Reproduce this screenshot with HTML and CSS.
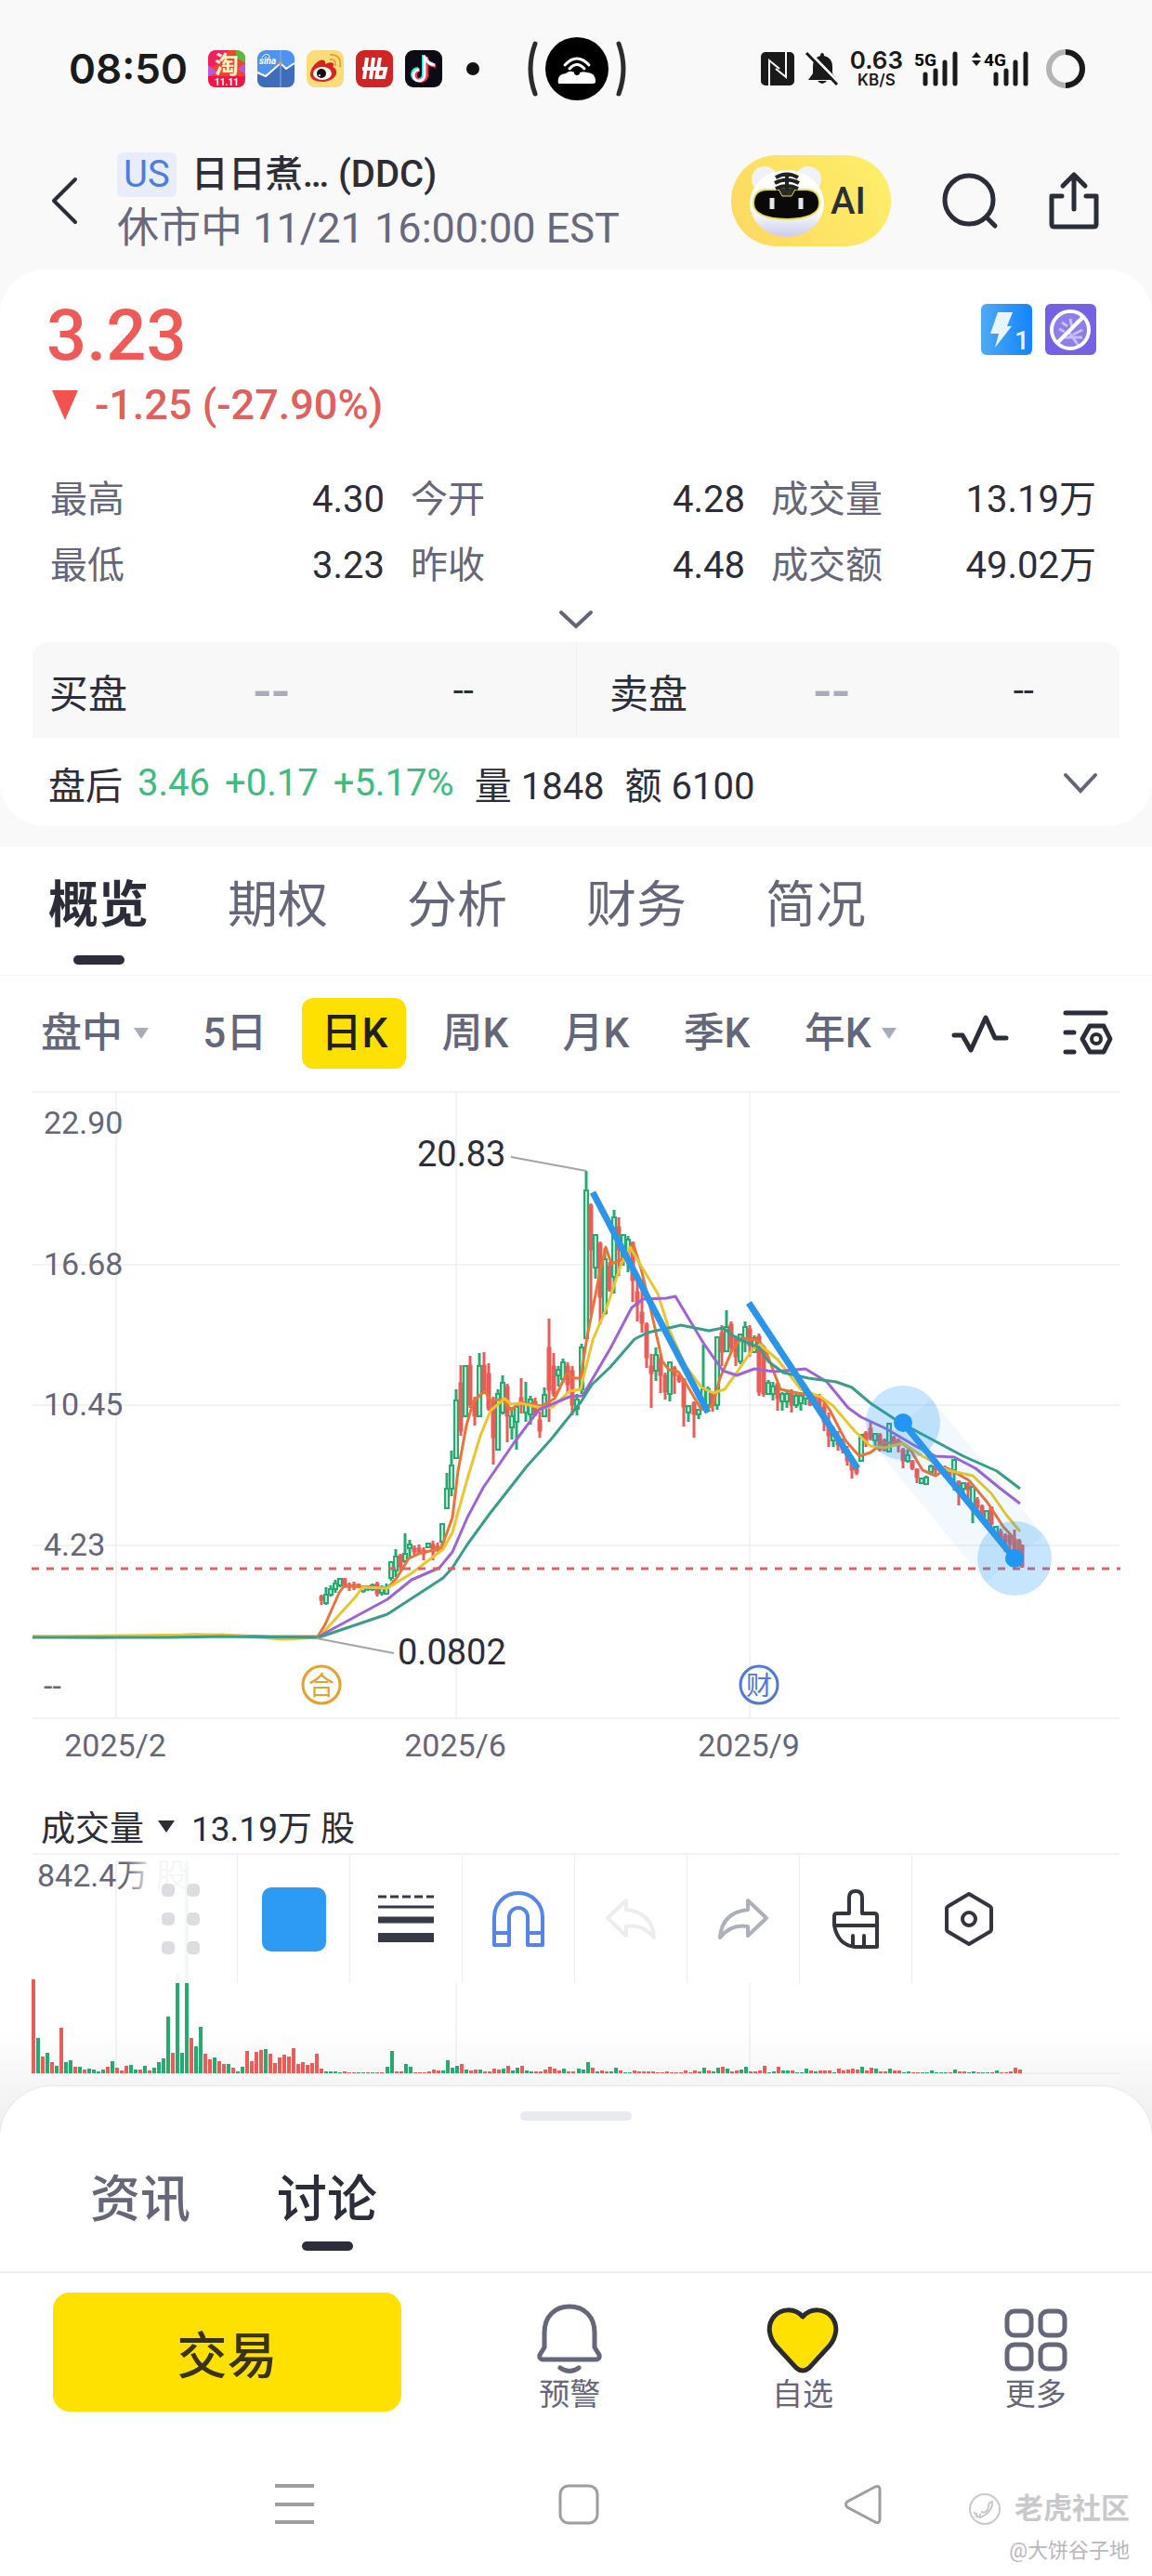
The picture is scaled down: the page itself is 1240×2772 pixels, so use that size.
FILE: index.html
```html
<!DOCTYPE html>
<html lang="zh-CN">
<head>
<meta charset="UTF-8">
<meta name="viewport" content="width=device-width, initial-scale=1.0">
<title>日日煮 (DDC)</title>
<link rel="stylesheet" href="styles.css">
</head>
<body>

<div class="status-bar">
  <div class="status-left">
    <span class="clock">08:50</span>
    <svg class="app-icon" viewBox="0 0 40 40">
      <rect width="40" height="40" rx="9" fill="#f0442d"/>
      <path d="M0 9Q0 0 9 0H22L12 14L0 20z" fill="#f0205c"/>
      <path d="M30 0Q40 0 40 10V14L30 8z" fill="#57b83b"/>
      <path d="M0 16L10 24L0 28zM40 14V26L32 20z" fill="#b55be0"/>
      <path d="M0 28H40V31Q40 40 31 40H9Q0 40 0 31z" fill="#f01548"/>
      <text x="20" y="25" font-size="26" font-weight="700" fill="#fff3c8" text-anchor="middle">淘</text>
      <text x="20" y="38" font-size="10" font-weight="700" fill="#fff" text-anchor="middle">11.11</text>
    </svg>
    <svg class="app-icon" viewBox="0 0 40 40">
      <rect width="40" height="40" rx="9" fill="#4f92f0"/>
      <path d="M0 24L9 28L25 14L31 20L40 14V31Q40 40 31 40H9Q0 40 0 31z" fill="#3f6dbb"/>
      <path d="M0 24L9 28L25 14L31 20L40 14" fill="none" stroke="#fff" stroke-width="2"/>
      <path d="M25 0V40" stroke="#8bb1e6" stroke-width="1"/>
      <circle cx="25" cy="14" r="2" fill="#d9a14e"/>
      <path d="M5 8Q8 3 12 5Q15 7 11 9" fill="none" stroke="#fff" stroke-width="1"/>
      <text x="2" y="15" font-size="10" font-weight="700" font-style="italic" fill="#fff">sina</text>
    </svg>
    <svg class="app-icon" viewBox="0 0 40 40">
      <rect width="40" height="40" rx="9" fill="#fbdc7a"/>
      <path d="M4 26C4 17 15 8 19 11C21 13 20 15 20 15C28 11 31 15 28 18C35 20 34 33 18 34C9 34 4 31 4 26z" fill="#d8221f"/>
      <ellipse cx="17" cy="25" rx="10" ry="7" fill="#fff"/>
      <circle cx="16" cy="25" r="5" fill="#111"/>
      <circle cx="14" cy="27" r="1" fill="#fff"/>
      <path d="M25 10Q32 9 31 17M25 5Q38 4 36 18" fill="none" stroke="#e8a33a" stroke-width="2"/>
    </svg>
    <svg class="app-icon" viewBox="0 0 40 40">
      <rect width="40" height="40" rx="9" fill="#d02525"/>
      <path d="M12 8L9 31M19 8L16 31M7 20H23M26 8L22 31M22 20H32L30 29H22" fill="none" stroke="#fff" stroke-width="4"/>
    </svg>
    <svg class="app-icon" viewBox="0 0 40 40">
      <rect width="40" height="40" rx="9" fill="#0c0a14"/>
      <path d="M20 5V26A6 6 0 1 1 14 20M20 7Q22 14 30 15" fill="none" stroke="#28e3e0" stroke-width="4"/>
      <path d="M23 7V28A6 6 0 1 1 16 21M23 9Q25 16 33 17" fill="none" stroke="#f4315b" stroke-width="4"/>
      <path d="M21 6V27A6 6 0 1 1 15 21M22 8Q24 15 32 16" fill="none" stroke="#fff" stroke-width="3"/>
    </svg>
    <svg class="dot" viewBox="0 0 14 14"><circle cx="7" cy="7" r="7" fill="#111"/></svg>
  </div>
  <svg class="camera" viewBox="0 0 108 68">
    <path d="M9 7Q-1 34 9 61M99 7Q109 34 99 61" fill="none" stroke="#2b2b2b" stroke-width="5" stroke-linecap="round"/>
    <circle cx="54" cy="34" r="34" fill="#000"/>
    <path d="M34 50Q32 40 42 39Q48 34 54 40Q58 36 65 38Q74 38 74 48Q74 50 70 50z" fill="#fff"/>
    <path d="M41 30Q54 16 67 30M46 34Q54 25 62 34" fill="none" stroke="#fff" stroke-width="3" stroke-linecap="round"/>
    <circle cx="54" cy="38" r="3" fill="#000"/>
  </svg>
  <div class="status-right">
    <svg class="nfc" viewBox="0 0 36 36">
      <rect width="36" height="36" rx="5" fill="#1a1a1a"/>
      <path d="M9 36V9L20 18M27 0V27L16 18" fill="none" stroke="#fafafa" stroke-width="2"/>
    </svg>
    <svg class="mute" viewBox="0 0 36 36">
      <path d="M18 1Q20 1 20 4Q29 6 29 16V23L34 30H3L8 23V16Q8 6 16 4Q16 1 18 1zM13 31H23Q18 37 13 31z" fill="#1a1a1a"/>
      <path d="M3 -1L36 33" stroke="#fafafa" stroke-width="3"/>
      <path d="M1 1L34 35" stroke="#1a1a1a" stroke-width="3"/>
    </svg>
    <span class="speed"><b>0.63</b><small>KB/S</small></span>
    <svg class="signal" viewBox="0 0 50 36">
      <text x="0" y="15" class="net">5G</text>
      <path d="M12 24V34M23 20V34M33 11V34M44 2V34" stroke="#1a1a1a" stroke-width="5" stroke-linecap="round"/>
    </svg>
    <svg class="signal signal-4g" viewBox="0 0 64 36">
      <path d="M0 6L5 0L10 6zM0 9L5 15L10 9z" fill="#1a1a1a"/>
      <text x="13" y="15" class="net">4G</text>
      <path d="M26 24V34M37 20V34M47 11V34M58 2V34" stroke="#1a1a1a" stroke-width="5" stroke-linecap="round"/>
    </svg>
    <svg class="battery" viewBox="0 0 42 42">
      <circle cx="21" cy="21" r="18" fill="none" stroke="#b4b4b4" stroke-width="6"/>
      <path d="M21 3A18 18 0 0 1 21 39" fill="none" stroke="#1a1a1a" stroke-width="6"/>
    </svg>
  </div>
</div>

<header class="header">
  <button class="icon-btn back" aria-label="返回">
    <svg width="30" height="52" viewBox="0 0 30 52"><path d="M27 3L4 26L27 49" fill="none" stroke="#2c2d3a" stroke-width="4" stroke-linecap="round" stroke-linejoin="round"/></svg>
  </button>
  <div class="title">
    <h1><span class="market">US</span>日日煮… (DDC)</h1>
    <p>休市中 11/21 16:00:00 EST</p>
  </div>
  <button class="ai-btn">
    <svg width="82" height="86" viewBox="0 0 82 86">
      <defs><linearGradient id="head" x1="0" y1="0" x2="0" y2="1"><stop offset="0.6" stop-color="#fff"/><stop offset="1" stop-color="#c9cdea"/></linearGradient></defs>
      <circle cx="17" cy="20" r="14" fill="#f1f1fa"/>
      <circle cx="64" cy="20" r="14" fill="#f1f1fa"/>
      <ellipse cx="41" cy="46" rx="40" ry="36" fill="url(#head)"/>
      <path d="M5 46Q5 31 20 31H61Q76 31 76 46Q76 62 41 63Q5 62 5 46z" fill="#0a0908" stroke="#e9dd50" stroke-width="2"/>
      <path d="M31 29H51L46 38H36z" fill="#2b2b2b" stroke="#e9dd50" stroke-width="1"/>
      <path d="M29 18Q41 11 53 18M28 24Q41 17 54 24M29 30Q41 24 53 30M41 15V32" fill="none" stroke="#222" stroke-width="4"/>
      <path d="M25 40V52M56 40V52" stroke="#e6e6ea" stroke-width="5"/>
    </svg>
    AI
  </button>
  <button class="icon-btn search" aria-label="搜索">
    <svg width="62" height="62" viewBox="0 0 62 62"><circle cx="30" cy="30" r="26" fill="none" stroke="#2c2d3a" stroke-width="5"/><path d="M49 49L58 58" stroke="#2c2d3a" stroke-width="5" stroke-linecap="round"/></svg>
  </button>
  <button class="icon-btn share" aria-label="分享">
    <svg width="54" height="62" viewBox="0 0 54 62"><path d="M14 26H3V56Q3 59 6 59H48Q51 59 51 56V26H40M27 40V4M15 15L27 3L39 15" fill="none" stroke="#2c2d3a" stroke-width="5" stroke-linecap="round" stroke-linejoin="round"/></svg>
  </button>
</header>

<section class="card quote">
  <div class="price-row">
    <strong class="price">3.23</strong>
    <span class="badges">
      <svg width="55" height="55" viewBox="0 0 55 55">
        <defs><linearGradient id="lv1"><stop offset="0" stop-color="#4eaaf3"/><stop offset="1" stop-color="#1384fb"/></linearGradient></defs>
        <rect width="55" height="55" rx="6" fill="url(#lv1)"/>
        <path d="M18 9H34L28 24H33L15 47L19 32H10z" fill="#e8f5ff"/>
        <text x="36" y="49" font-size="28" font-weight="500" fill="#e8f5ff">1</text>
      </svg>
      <svg width="55" height="55" viewBox="0 0 55 55">
        <rect width="55" height="55" rx="6" fill="#7660e4"/>
        <circle cx="27" cy="28" r="18" fill="#8f7ee8"/>
        <path d="M18 20L24 24M15 27L21 30M27 16L29 26M35 18L31 24M17 36H40M26 31L36 45M40 28L30 33" stroke="#c7bff5" stroke-width="3"/>
        <circle cx="27" cy="28" r="20" fill="none" stroke="#fff" stroke-width="4"/>
        <path d="M13 42L41 14" stroke="#fff" stroke-width="4"/>
      </svg>
    </span>
  </div>
  <div class="change"><svg width="28" height="32" viewBox="0 0 28 32"><path d="M0 0H28L14 32z" fill="#f4524f"/></svg>-1.25 (-27.90%)</div>

  <dl class="stats">
    <div><dt>最高</dt><dd>4.30</dd></div>
    <div><dt>今开</dt><dd>4.28</dd></div>
    <div><dt>成交量</dt><dd>13.19万</dd></div>
    <div><dt>最低</dt><dd>3.23</dd></div>
    <div><dt>昨收</dt><dd>4.48</dd></div>
    <div><dt>成交额</dt><dd>49.02万</dd></div>
  </dl>
  <button class="expand" aria-label="展开">
    <svg width="38" height="22" viewBox="0 0 38 22"><path d="M3 3L19 18L35 3" fill="none" stroke="#63647a" stroke-width="4" stroke-linecap="round"/></svg>
  </button>

  <div class="book">
    <div class="side"><span>买盘</span><b>--</b><i>--</i></div>
    <div class="side"><span>卖盘</span><b>--</b><i>--</i></div>
  </div>

  <div class="after">
    <span>盘后</span>
    <span class="up">3.46</span>
    <span class="up">+0.17</span>
    <span class="up">+5.17%</span>
    <span class="pair">量<span>1848</span></span>
    <span class="pair">额<span>6100</span></span>
    <button class="icon-btn" aria-label="更多盘后">
      <svg width="38" height="24" viewBox="0 0 38 24"><path d="M3 3L19 20L35 3" fill="none" stroke="#63647a" stroke-width="4" stroke-linecap="round"/></svg>
    </button>
  </div>
</section>

<main class="content">
  <nav class="tabs">
    <button class="tab active">概览</button>
    <button class="tab">期权</button>
    <button class="tab">分析</button>
    <button class="tab">财务</button>
    <button class="tab">简况</button>
  </nav>

  <div class="periods">
    <button class="period">盘中<span class="caret"></span></button>
    <button class="period">5日</button>
    <button class="period selected">日K</button>
    <button class="period">周K</button>
    <button class="period">月K</button>
    <button class="period">季K</button>
    <button class="period">年K<span class="caret"></span></button>
    <button class="period" aria-label="画线">
      <svg width="62" height="42" viewBox="0 0 62 42"><path d="M3 23H12L21 39L37 4L47 26H59" fill="none" stroke="#2c2d3a" stroke-width="5" stroke-linecap="round" stroke-linejoin="round"/></svg>
    </button>
    <button class="period" aria-label="指标设置">
      <svg width="54" height="52" viewBox="0 0 54 52"><path d="M3 4H46M3 25H12M3 46H12M29 18H44L51 32L44 46H29L21 32z" fill="none" stroke="#2c2d3a" stroke-width="5" stroke-linecap="round" stroke-linejoin="round"/><circle cx="36" cy="32" r="5" fill="none" stroke="#2c2d3a" stroke-width="4"/></svg>
    </button>
  </div>

  <svg class="chart" viewBox="0 1174 1240 763">
    <path class="grid" d="M35 1175H1205M35 1361H1205M35 1512H1205M35 1663H1205M35 1849H1205M125 1175V1849M491 1175V1849M807 1175V1849"/>
    <g id="candles"></g>
    <g class="ma">
      <path stroke="#e8743a" d="M35 1761L110 1762L210 1759L290 1761L342 1761L350 1748L365 1714L370 1707L400 1708L417 1709L427 1698L440 1677L453 1671L467 1668L475 1666L487 1633L493 1583L502 1534L510 1507L522 1497L528 1507L541 1506L550 1517L560 1509L583 1513L597 1505L610 1478L618 1483L625 1483L632 1438L645 1373L652 1342L658 1360L668 1356L682 1340L690 1365L700 1407L713 1465L720 1474L730 1476L738 1488L755 1517L767 1513L775 1483L788 1453L798 1440L815 1442L823 1450L840 1495L863 1500L883 1503L893 1517L910 1550L925 1567L937 1563L950 1553L970 1552L980 1560L993 1582L1007 1588L1020 1580L1043 1593L1063 1617L1080 1643L1093 1657L1100 1668"/>
      <path stroke="#e9c62d" d="M35 1761L240 1759L305 1764L343 1762L383 1718L390 1708L417 1709L443 1693L477 1667L487 1649L502 1595L517 1545L528 1518L543 1505L550 1511L560 1510L583 1515L595 1514L613 1497L625 1495L638 1442L653 1407L668 1362L678 1342L690 1362L708 1392L720 1430L738 1470L755 1493L768 1499L780 1495L793 1477L810 1452L818 1447L837 1463L862 1495L883 1503L897 1513L920 1540L937 1556L952 1558L972 1553L993 1567L1020 1582L1047 1588L1067 1607L1083 1630L1098 1648"/>
      <path stroke="#a063d2" d="M343 1761L417 1721L443 1700L473 1687L487 1670L503 1633L520 1601L553 1553L580 1517L613 1503L627 1502L657 1451L680 1407L692 1398L717 1397L727 1395L757 1445L778 1475L793 1480L812 1473L833 1476L867 1473L890 1487L913 1515L927 1525L953 1537L987 1557L1007 1567L1027 1568L1050 1580L1077 1602L1098 1618"/>
      <path stroke="#3a9c8b" d="M35 1762H180L240 1761L343 1762L417 1737L477 1698L487 1687L503 1662L527 1629L567 1578L593 1549L625 1509L637 1490L657 1471L683 1441L697 1434L720 1429L733 1426L763 1432L778 1429L793 1440L817 1450L827 1465L843 1477L870 1483L900 1487L917 1493L937 1510L963 1527L990 1542L1037 1567L1073 1583L1098 1602"/>
    </g>
    <path d="M34 1688H1206" stroke="#dd6462" stroke-width="3" stroke-dasharray="8 8"/>
    <g class="trend">
      <path class="band" d="M972 1531L1092 1677"/>
      <circle class="halo" cx="972" cy="1531" r="40"/>
      <circle class="halo" cx="1092" cy="1677" r="40"/>
      <path d="M638 1283L762 1520M806 1402L923 1580M972 1531L1092 1677"/>
      <circle cx="972" cy="1531" r="10"/>
      <circle cx="1092" cy="1677" r="10"/>
    </g>
    <path class="leader" d="M550 1245L631 1260M341 1763L424 1779"/>
    <g class="peak">
      <text x="449" y="1255">20.83</text>
      <text x="428" y="1791">0.0802</text>
    </g>
    <g class="axis">
      <text x="47" y="1220">22.90</text>
      <text x="47" y="1372">16.68</text>
      <text x="47" y="1523">10.45</text>
      <text x="47" y="1674">4.23</text>
      <text x="47" y="1826">--</text>
      <text x="124" y="1890" text-anchor="middle">2025/2</text>
      <text x="490" y="1890" text-anchor="middle">2025/6</text>
      <text x="806" y="1890" text-anchor="middle">2025/9</text>
    </g>
    <g class="event">
      <circle cx="346" cy="1813" r="20" stroke="#e5a12e"/>
      <text x="346" y="1824" fill="#e5a12e">合</text>
      <circle cx="817" cy="1813" r="20" stroke="#5079d3"/>
      <text x="817" y="1824" fill="#5079d3">财</text>
    </g>
  </svg>

  <div class="volume-head">成交量<span class="caret dark"></span><span>13.19万 股</span></div>
  <div class="volume">
    <svg class="chart" viewBox="0 1995 1240 300">
      <path class="grid" d="M35 1995H1205M35 2231H1205M125 2003V2231M491 1995V2231M807 1995V2231"/>
      <g id="bars"></g>
      <text x="40" y="2030" class="vol-max">842.4万 股</text>
    </svg>
    <div class="toolbar">
      <button class="drag" aria-label="移动">
        <svg width="42" height="76" viewBox="0 0 42 76" fill="#dcdce1"><rect width="14" height="14" rx="5"/><rect x="27" width="14" height="14" rx="5"/><rect y="31" width="14" height="14" rx="5"/><rect x="27" y="31" width="14" height="14" rx="5"/><rect y="62" width="14" height="14" rx="5"/><rect x="27" y="62" width="14" height="14" rx="5"/></svg>
      </button>
      <button aria-label="颜色"><span class="swatch"></span></button>
      <button aria-label="线型">
        <svg width="62" height="52" viewBox="0 0 62 52" stroke="#383946"><path d="M1 2H61" stroke-width="3" stroke-dasharray="9 4"/><path d="M1 13H61" stroke-width="3"/><path d="M1 27H61" stroke-width="7"/><path d="M1 46H61" stroke-width="10"/></svg>
      </button>
      <button aria-label="磁吸">
        <svg width="56" height="60" viewBox="0 0 56 60" fill="none" stroke="#5585e8" stroke-width="4" stroke-linejoin="round"><path d="M2 58V28A26 26 0 0 1 54 28V58H38V28A10 10 0 0 0 18 28V58zM2 45H18M38 45H54"/></svg>
      </button>
      <button aria-label="撤销">
        <svg width="56" height="46" viewBox="0 0 56 46" fill="none" stroke="#ededf0" stroke-width="4" stroke-linejoin="round"><path d="M23 3L3 22L23 41V31Q41 28 53 43Q51 16 23 13z"/></svg>
      </button>
      <button aria-label="重做">
        <svg width="56" height="46" viewBox="0 0 56 46" fill="none" stroke="#adafba" stroke-width="4" stroke-linejoin="round"><path d="M33 3L53 22L33 41V31Q15 28 3 43Q5 16 33 13z"/></svg>
      </button>
      <button aria-label="清除">
        <svg width="50" height="64" viewBox="0 0 50 64" fill="none" stroke="#343541" stroke-width="4" stroke-linecap="round" stroke-linejoin="round"><path d="M18 26V9Q18 2 25 2T32 9V26H45Q48 26 48 29V62H24Q6 60 2 39V29Q2 26 5 26zM2 39H48M22 50V61M34 50V61"/></svg>
      </button>
      <button aria-label="设置">
        <svg width="52" height="58" viewBox="0 0 52 58" fill="none" stroke="#343541" stroke-width="4" stroke-linejoin="round"><path d="M26 2L48 15Q50 16 50 18V40Q50 42 48 43L26 56L4 43Q2 42 2 40V18Q2 16 4 15z"/><circle cx="26" cy="29" r="7"/></svg>
      </button>
    </div>
  </div>
</main>

<section class="sheet">
  <div class="handle"></div>
  <nav class="sheet-tabs">
    <button class="tab">资讯</button>
    <button class="tab active">讨论</button>
  </nav>
</section>

<div class="actions">
  <button class="trade">交易</button>
  <button class="action">
    <svg width="72" height="78" viewBox="0 0 72 78" fill="none" stroke="#65667a" stroke-width="5" stroke-linecap="round" stroke-linejoin="round"><path d="M36 3C20 3 9 14 9 31V47L4 55Q3 60 8 60H64Q69 60 68 55L63 47V31C63 14 52 3 36 3zM26 69Q36 76 46 69"/></svg>
    预警
  </button>
  <button class="action">
    <svg width="76" height="74" viewBox="0 0 76 74"><path d="M38 10C29 0 15 1 7 10C-1 20 2 32 9 41L31 65Q38 71 45 65L67 41C74 32 77 20 69 10C61 1 47 0 38 10z" fill="#fee101" stroke="#2b2b2b" stroke-width="5" stroke-linejoin="round"/></svg>
    自选
  </button>
  <button class="action">
    <svg width="68" height="73" viewBox="0 0 68 73" fill="none" stroke="#65667a" stroke-width="5"><rect x="3" y="3" width="26" height="26" rx="8"/><rect x="39" y="3" width="26" height="26" rx="8"/><rect x="3" y="39" width="26" height="26" rx="8"/><rect x="39" y="39" width="26" height="26" rx="8"/></svg>
    更多
  </button>
</div>

<footer class="system-nav">
  <button class="icon-btn" aria-label="任务"><svg width="42" height="44" viewBox="0 0 42 44"><path d="M0 2H42M0 22H42M0 41H42" stroke="#9e9e9e" stroke-width="4"/></svg></button>
  <button class="icon-btn" aria-label="主页"><svg width="44" height="44" viewBox="0 0 44 44"><rect x="2" y="2" width="40" height="40" rx="9" fill="none" stroke="#9e9e9e" stroke-width="3"/></svg></button>
  <button class="icon-btn" aria-label="返回上级"><svg width="42" height="44" viewBox="0 0 42 44"><path d="M34 3Q39 1 39 6V38Q39 43 34 41L4 25Q1 22 4 19z" fill="none" stroke="#9e9e9e" stroke-width="3"/></svg></button>
  <div class="watermark">
    <p class="brand"><svg width="36" height="36" viewBox="0 0 36 36" fill="none" stroke="#c9c9cd" stroke-width="2"><circle cx="18" cy="18" r="16"/><path d="M6 21Q12 30 17 25Q27 19 26 10Q22 10 22 16Q20 23 14 21M9 22V27M13 23V28"/></svg>老虎社区</p>
    <p>@大饼谷子地</p>
  </div>
</footer>

<script>
  // one row per day: x, high, low, body top, body bottom, colour
  const candles = `
346 1716 1727 1718 1722 r,351 1708 1727 1716 1725 g,356 1706 1718 1710 1716 g,361 1700 1714 1704 1710 g
366 1698 1708 1699 1706 g,371 1698 1708 1699 1706 r,376 1703 1712 1705 1707 r,381 1702 1711 1705 1707 r
386 1704 1708 1705 1707 r,391 1706 1714 1708 1712 g,396 1706 1712 1707 1710 g,401 1704 1712 1706 1710 g
406 1702 1718 1704 1715 r,411 1706 1717 1708 1714 g,416 1704 1716 1708 1715 g,421 1680 1701 1681 1698 g
426 1667 1697 1675 1690 g,431 1672 1690 1674 1686 r,436 1650 1682 1672 1680 g,441 1657 1676 1662 1666 g
446 1663 1673 1666 1670 r,451 1662 1673 1666 1670 r,456 1665 1679 1668 1672 r,461 1660 1666 1661 1665 g
466 1658 1679 1662 1670 r,471 1660 1670 1664 1668 r,476 1639 1664 1640 1659 g,481 1585 1624 1602 1623 g
486 1561 1610 1577 1602 g,491 1495 1570 1507 1569 g,496 1469 1545 1488 1540 r,501 1469 1525 1470 1524 g
506 1459 1515 1469 1512 r,511 1503 1534 1508 1524 r,516 1456 1525 1470 1524 g,521 1455 1500 1469 1498 r
526 1467 1518 1478 1516 r,531 1503 1576 1508 1547 r,536 1495 1561 1500 1560 g,541 1480 1522 1488 1520 g
546 1489 1552 1492 1524 r,551 1514 1549 1524 1536 g,556 1511 1560 1514 1530 g,561 1483 1521 1504 1512 r
566 1487 1530 1510 1520 g,571 1502 1533 1506 1522 g,576 1504 1524 1508 1522 r,581 1519 1547 1528 1540 r
586 1493 1525 1501 1524 g,591 1419 1530 1450 1496 r,596 1456 1503 1470 1500 r,601 1470 1492 1474 1480 g
606 1462 1488 1466 1484 g,611 1466 1500 1470 1490 r,616 1470 1523 1475 1512 r,621 1500 1523 1506 1516 g
626 1446 1500 1450 1495 g,631 1260 1440 1281 1440 g,636 1295 1416 1297 1345 r,641 1328 1376 1329 1364 g
646 1336 1425 1338 1396 r,651 1343 1415 1355 1413 g,656 1358 1390 1362 1388 r,661 1302 1392 1310 1374 g
666 1310 1373 1320 1345 r,671 1328 1362 1329 1352 g,676 1330 1369 1334 1345 g,681 1336 1401 1337 1378 r
686 1373 1422 1390 1404 r,691 1377 1434 1412 1424 r,696 1423 1472 1425 1461 r,701 1457 1515 1470 1478 r
706 1450 1486 1458 1475 g,711 1458 1499 1462 1480 r,716 1477 1506 1480 1498 r,721 1466 1508 1466 1500 g
726 1470 1500 1472 1480 r,731 1478 1488 1480 1486 r,736 1483 1535 1484 1514 r,741 1512 1530 1513 1520 g
747 1508 1547 1510 1522 r,752 1516 1527 1517 1522 g,757 1447 1515 1495 1514 g,762 1492 1513 1495 1512 g
767 1497 1519 1498 1513 r,772 1438 1517 1439 1512 g,777 1426 1470 1434 1455 r,782 1410 1455 1428 1454 g
787 1422 1455 1425 1450 r,792 1437 1470 1440 1460 r,797 1435 1468 1436 1465 g,802 1422 1455 1428 1440 g
807 1426 1460 1430 1448 r,812 1437 1456 1440 1455 g,817 1435 1502 1438 1498 r,822 1448 1503 1450 1500 r
827 1485 1501 1488 1500 g,832 1487 1507 1492 1500 g,837 1488 1518 1489 1505 r,842 1498 1518 1500 1508 g
847 1497 1515 1500 1508 g,852 1495 1520 1498 1512 r,857 1500 1515 1502 1512 g,862 1498 1518 1502 1510 g
867 1490 1512 1498 1505 g,872 1500 1513 1502 1512 r,877 1500 1513 1503 1510 r,882 1500 1522 1504 1516 r
887 1510 1540 1514 1530 r,892 1520 1557 1530 1545 r,897 1535 1557 1540 1550 g,902 1540 1561 1545 1555 r
907 1548 1564 1552 1560 r,912 1556 1577 1560 1572 r,917 1568 1591 1572 1582 r,922 1575 1587 1578 1585 r
927 1543 1573 1544 1572 g,932 1540 1557 1542 1552 r,937 1530 1550 1537 1548 r,942 1542 1558 1543 1550 g
947 1542 1562 1544 1560 r,952 1548 1562 1550 1560 r,957 1531 1563 1532 1562 g,962 1545 1556 1547 1553 r
967 1548 1563 1550 1556 r,972 1558 1580 1560 1572 r,977 1560 1574 1566 1572 g,982 1571 1582 1572 1580 r
987 1580 1596 1581 1590 r,992 1590 1596 1591 1596 g,997 1588 1598 1590 1597 g,1002 1576 1585 1578 1584 g
1007 1576 1586 1578 1582 r,1012 1578 1584 1579 1583 r,1017 1577 1590 1579 1585 r,1022 1580 1595 1582 1588 r
1027 1570 1604 1571 1582 g,1032 1593 1620 1594 1600 r,1037 1595 1612 1596 1602 g,1042 1595 1612 1597 1603 r
1047 1598 1639 1600 1620 g,1052 1611 1625 1614 1622 r,1057 1619 1634 1621 1630 r,1062 1625 1642 1626 1636 g
1067 1621 1642 1622 1640 r,1072 1642 1652 1643 1650 g,1077 1645 1660 1648 1656 r,1082 1650 1670 1652 1660 r
1087 1650 1672 1652 1662 r,1092 1646 1672 1656 1670 r,1097 1656 1672 1658 1670 r,1100 1662 1687 1663 1686 r`;

  // runs of volume bars: start x, then colour + height every 5px
  const volumes = {
    35: 'r101 g38 r18 g22 r12 g8 r49 g12 g14 r7 g7 r4 g5 g4 g2 g4 r7 g13 r6 r3 r8 g9 g4 r4 g8 r3 g6 g12 g16 g61 r22 g108 g22 g228 r38 g29 g50 r21 r15 g17 r13 r10 g10 r6 g2 g7 r24 r13 r23 r25 g26 r21 r11 r17 r20 r18 r27 r10 r12 r9 r11 r21 r5 g2 g2 g2 g1 r2 r1 r1 g1 g1 r1 g1 r1 r1',
    416: 'g7 g24 r2 r2 g10 g7 r1 r1 r1 r2 r4 r3 g3 g14 g6 g8 r10 g4 r3 r4 g4 r2 r2 r5 r4 g5 r8 g3 g6 r8 g3 g2 r2 r2 r4 r7 r5 r3 g5 r2 r2',
    622: 'g5 g4 g12 r6 g2 r3 r2 g2 g6 r3 g1 g1 r3 r2 r2 r2 r2 r1 r1 r2 r1 r1 r1 r3 r1 r3 r2 g6 r3 g2 g6 r7 g5 r2 r3 g4 g7 r2 r2 r3 r8 g1 g2 r7 g3 g3 r3 g1 g1 g5 r3 g2 r3 r3 r3 g1 r5 r3 r4 r5 r4 g7 r3 r6 g5 r2 r2 g5 r3 r3 g1 g2 r1 r1 g1 g1 g3 g1 g1 g1 r1 g4 r2 r2 g1 g2 r1 g1 g1 r1 g3 r1 r1 r2 r6 r4'
  };

  const colors = { r: '#ea5c57', g: '#26aa70' };

  let html = '';
  candles.trim().split(/[\n,]/).forEach(row => {
    const [x, high, low, top, bottom, c] = row.split(' ');
    html += `<path d="M${x} ${high}V${low}" stroke="${colors[c]}" stroke-width="3"/>`;
    html += `<rect x="${x - 2}" y="${top}" width="4" height="${bottom - top}" fill="${c == 'g' ? '#bfe8d3' : colors.r}" stroke="${colors[c]}" stroke-width="${c == 'g' ? 2 : 1}"/>`;
  });
  document.getElementById('candles').innerHTML = html;

  html = '';
  for (const start in volumes) {
    volumes[start].split(' ').forEach((bar, i) => {
      const h = bar.slice(1);
      html += `<rect x="${Number(start) - 1 + i * 5}" y="${2231 - h}" width="4" height="${h}" fill="${colors[bar[0]]}"/>`;
    });
  }
  document.getElementById('bars').innerHTML = html;
</script>

</body>
</html>
```

FILE: styles.css
```css
* {
  box-sizing: border-box;
}
body {
  margin: 0;
  font-family: Roboto, "Noto Sans CJK SC", sans-serif;
  font-size: 40px;
  color: #2c2d38;
  background-color: #f9f9f9;
}
h1, p, dl, dd {
  margin: 0;
}
svg {
  display: block;
  overflow: visible;
}
button {
  font: inherit;
  color: inherit;
  background: none;
  border: none;
  padding: 0;
  cursor: pointer;
}

/* phone status bar */
.status-bar {
  display: flex;
  align-items: center;
  height: 148px;
  padding: 0 72px 0 74px;
  font-family: Inter, sans-serif;
  color: #1a1a1a;
}
.status-left, .status-right {
  flex: 1;
  display: flex;
  align-items: center;
}
.status-left {
  gap: 13px;
}
.status-right {
  justify-content: flex-end;
  gap: 12px;
}
.clock {
  width: 137px;
  font-size: 44px;
  font-weight: 600;
}
.app-icon {
  width: 40px;
  height: 40px;
  font-family: Roboto, "Noto Sans CJK SC", sans-serif;
}
.dot {
  width: 14px;
  margin-left: 13px;
}
.camera {
  width: 108px;
}
.nfc, .mute {
  width: 36px;
}
.speed {
  display: flex;
  flex-direction: column;
  align-items: center;
}
.speed b {
  font-size: 26px;
  line-height: 24px;
  font-weight: 600;
}
.speed small {
  font-size: 17px;
  line-height: 18px;
  font-weight: 600;
}
.signal {
  width: 50px;
}
.signal-4g {
  width: 64px;
}
.net {
  font-size: 19px;
  font-weight: 700;
  font-family: Roboto, sans-serif;
}
.battery {
  width: 42px;
  margin-left: 4px;
}

/* header */
.header {
  display: flex;
  align-items: center;
  padding: 14px 57px 20px 54px;
}
.title {
  flex: 1;
  margin-left: 42px;
}
.title h1 {
  display: flex;
  align-items: center;
  gap: 16px;
  font-size: 40px;
  line-height: 52px;
  font-weight: 500;
}
.market {
  padding: 0 7px;
  line-height: 48px;
  font-weight: 400;
  color: #4e7de0;
  background-color: #e9edfb;
  border-radius: 6px;
}
.title p {
  margin-top: 8px;
  font-size: 45px;
  line-height: 48px;
  color: #686980;
}
.ai-btn {
  display: flex;
  align-items: center;
  gap: 6px;
  width: 172px;
  height: 98px;
  padding-left: 19px;
  border-radius: 49px;
  background: linear-gradient(60deg, #fdd75f, #fef069);
  font-weight: 500;
  font-size: 40px;
}
.search {
  margin-left: 54px;
}
.share {
  margin-left: 54px;
}

/* quote card */
.card {
  background-color: #fff;
  border-radius: 48px;
}
.quote {
  padding-top: 31px;
}
.price-row {
  display: flex;
  justify-content: space-between;
  align-items: center;
  height: 80px;
  padding: 0 60px 0 50px;
}
.price {
  font-size: 76px;
  line-height: 80px;
  font-weight: 500;
  color: #ee5a57;
}
.badges {
  display: flex;
  gap: 14px;
  margin-bottom: 14px;
}
.change {
  display: flex;
  align-items: center;
  gap: 18px;
  margin-top: 5px;
  padding-left: 56px;
  font-size: 45px;
  line-height: 60px;
  font-weight: 500;
  color: #e0605d;
}
.stats {
  display: grid;
  grid-template-columns: 1fr 1fr 350px;
  gap: 11px 28px;
  margin-top: 42px;
  padding: 0 60px 0 54px;
  line-height: 60px;
}
.stats div {
  display: flex;
  justify-content: space-between;
}
.stats dt {
  color: #65667a;
}
.expand {
  display: flex;
  align-items: center;
  justify-content: center;
  width: 100%;
  height: 52px;
  padding-top: 4px;
}
.book {
  display: grid;
  grid-template-columns: 1fr 1fr;
  margin: 0 35px;
  background-color: #f8f8f9;
  border-radius: 16px 16px 0 0;
}
.side {
  display: grid;
  grid-template-columns: 136px 1fr 1fr;
  align-items: center;
  height: 103px;
  padding: 2px 18px 0 18px;
  text-align: center;
}
.side + .side {
  padding: 2px 0 0 35px;
  border-left: 1px solid #efeff1;
}
.side span {
  font-size: 42px;
  text-align: left;
}
.side b {
  font-size: 58px;
  line-height: 60px;
  font-weight: 500;
  color: #a9abb9;
}
.side i {
  font-style: normal;
}
.after {
  display: flex;
  align-items: center;
  gap: 16px;
  height: 95px;
  padding: 2px 58px 0 52px;
}
.after .up {
  color: #3cbc7e;
}
.after .icon-btn {
  margin-left: auto;
}
.pair {
  display: flex;
  align-items: baseline;
  gap: 10px;
  margin-left: 6px;
}

/* tabs */
.content {
  margin-top: 22px;
  background-color: #fff;
}
.tabs {
  display: flex;
  gap: 85px;
  padding: 24px 52px 11px;
  border-bottom: 1px solid #f5f5f6;
}
.tab {
  font-size: 54px;
  line-height: 80px;
  color: #65667a;
}
.tab::after {
  content: "";
  display: block;
  width: 55px;
  height: 10px;
  margin: 13px auto 0;
  border-radius: 5px;
}
.tab.active {
  font-weight: 700;
  color: #2c2d3a;
}
.tab.active::after {
  background-color: #2c2d3a;
}
.periods {
  display: flex;
  justify-content: space-between;
  align-items: center;
  height: 124px;
  padding: 0 22px 0 24px;
}
.period {
  display: flex;
  align-items: center;
  justify-content: center;
  height: 76px;
  padding: 0 20px;
  font-size: 44px;
  line-height: 76px;
  font-weight: 500;
  color: #65667a;
  border-radius: 12px;
}
.period.selected {
  color: #22201c;
  background-color: #fee101;
}
.caret {
  margin-left: 12px;
  border: 8px solid transparent;
  border-top: 12px solid #a9abb9;
  border-bottom: 0;
}

/* charts */
.chart {
  width: 100%;
  height: auto;
}
.grid {
  fill: none;
  stroke: #e6e6e8;
  stroke-width: 1;
}
.ma path {
  fill: none;
  stroke-width: 3;
  stroke-linejoin: round;
}
.trend path {
  fill: none;
  stroke: #2b95ea;
  stroke-width: 7;
}
.trend circle {
  fill: #2196f3;
}
.trend .halo {
  opacity: 0.25;
}
.trend .band {
  stroke: #2196f3;
  stroke-width: 80;
  opacity: 0.06;
}
.leader {
  stroke: #a4a4a8;
  stroke-width: 2;
}
.peak {
  font-size: 38px;
  fill: #2c2d38;
}
.axis {
  font-size: 34px;
  fill: #65667a;
}
.event {
  font-size: 28px;
  text-anchor: middle;
}
.event circle {
  fill: none;
  stroke-width: 3;
}
.volume-head {
  display: flex;
  align-items: center;
  height: 58px;
  padding: 0 44px 2px;
  font-size: 37px;
}
.caret.dark {
  margin: 0 18px 0 15px;
  border-width: 13px 9px 0;
  border-top-color: #2c2d38;
}
.volume {
  position: relative;
  background: linear-gradient(#fff 62%, #eee);
}
.vol-max {
  font-size: 34px;
  fill: #65667a;
}
.toolbar {
  position: absolute;
  top: 1px;
  left: 135px;
  display: flex;
  height: 138px;
  background: linear-gradient(90deg, rgba(255, 255, 255, 0), rgba(255, 255, 255, 0.94) 30px);
}
.toolbar button {
  display: flex;
  align-items: center;
  justify-content: center;
  width: 121px;
  border-right: 1px solid #ececee;
}
.toolbar button:last-child {
  border-right: 0;
}
.swatch {
  width: 69px;
  height: 69px;
  border-radius: 10px;
  background-color: #2d9bf3;
}

/* bottom sheet */
.sheet {
  position: relative;
  margin-top: -50px;
  padding-top: 27px;
  background-color: #fff;
  border-radius: 56px 56px 0 0;
  border-bottom: 2px solid #f0f0f1;
  box-shadow: 0 -1px 2px rgba(0, 0, 0, 0.06);
}
.handle {
  width: 120px;
  height: 10px;
  margin: 0 auto 46px;
  border-radius: 5px;
  background-color: #e9eaef;
}
.sheet-tabs {
  display: flex;
  gap: 93px;
  padding: 0 97px 22px;
}
.sheet-tabs .tab {
  font-weight: 500;
}
.sheet-tabs .tab::after {
  margin-top: 4px;
}
.actions {
  display: flex;
  padding: 21px 0 0 57px;
  background-color: #fff;
}
.trade {
  width: 375px;
  height: 128px;
  margin-right: 56px;
  font-size: 54px;
  font-weight: 500;
  color: #3b3414;
  background-color: #fee101;
  border-radius: 18px;
}
.action {
  flex: 1;
  display: flex;
  flex-direction: column;
  align-items: center;
  justify-content: flex-end;
  gap: 2px;
  font-size: 33px;
  line-height: 36px;
  color: #65667a;
}

/* system navigation */
.system-nav {
  position: relative;
  display: flex;
  justify-content: space-between;
  padding: 78px 290px 55px 296px;
  background-color: #fff;
}
.watermark {
  position: absolute;
  right: 24px;
  bottom: 12px;
  font-size: 22px;
  line-height: 30px;
  text-align: right;
  color: #b8b8bc;
}
.watermark .brand {
  display: flex;
  align-items: center;
  gap: 14px;
  margin-bottom: 12px;
  font-size: 31px;
  font-weight: 700;
  color: #c9c9cd;
}
```
